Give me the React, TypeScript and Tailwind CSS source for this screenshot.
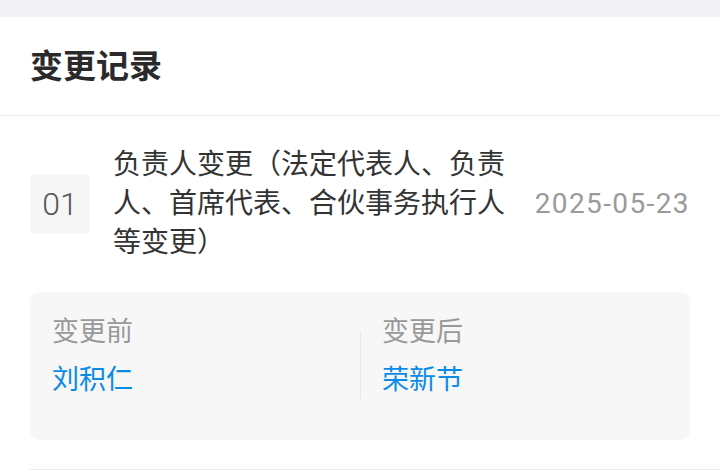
import React from "react"

const font = { fontFamily: 'Roboto, "Noto Sans CJK SC", sans-serif' }

export default function App() {
  return (
    <div className="w-[720px] h-[474px] overflow-hidden bg-white" style={font}>
      <div className="h-[17px] bg-[#f2f2f5]" />
      <div className="h-[99px] flex items-center px-[30px] border-b border-[#ececec]">
        <h1 className="text-[33px] font-bold text-[#2a2a2a] leading-none">变更记录</h1>
      </div>

      <div className="flex items-center px-[30px] pt-[29px]">
        <div className="w-[60px] h-[60px] rounded-[7px] bg-[#f6f6f6] flex items-center justify-center text-[32px] font-light text-[#555]">
          01
        </div>
        <div className="ml-[23px] w-[395px] text-[28px] leading-[39px] text-[#333]">
          负责人变更（法定代表人、负责人、首席代表、合伙事务执行人等变更）
        </div>
        <div className="ml-auto text-[28px] tracking-[1.4px] text-[#9a9a9a]">2025-05-23</div>
      </div>

      <div className="mx-[30px] mt-[30px] h-[148px] rounded-[9px] bg-[#f7f7f8] flex pt-[22px]">
        <div className="flex-1 pl-[22px]">
          <div className="text-[27px] leading-[36px] text-[#999]">变更前</div>
          <div className="mt-[12px] text-[27px] leading-[36px] text-[#0b8ae6]">刘积仁</div>
        </div>
        <div className="w-px h-[67px] mt-[18px] bg-[#e8e8e8]" />
        <div className="flex-1 pl-[21px]">
          <div className="text-[27px] leading-[36px] text-[#999]">变更后</div>
          <div className="mt-[12px] text-[27px] leading-[36px] text-[#0b8ae6]">荣新节</div>
        </div>
      </div>

      <div className="ml-[30px] mt-[29px] border-t border-[#ececec]" />
    </div>
  )
}
